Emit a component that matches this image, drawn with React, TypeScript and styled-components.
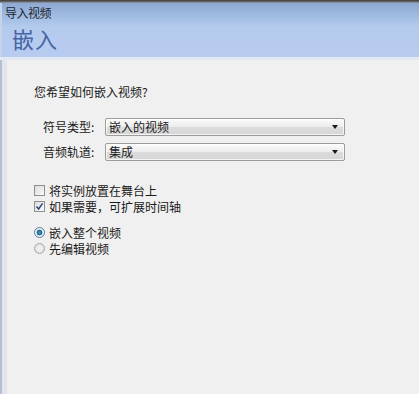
import React from 'react';
import styled, {createGlobalStyle} from 'styled-components';

const GlobalStyle = createGlobalStyle`
	html, body {
		margin: 0;
		padding: 0;
		background: #f0f0f0;
	}
	body {
		font-family: "Noto Sans CJK SC", "Noto Sans", sans-serif;
		font-size: 12px;
		color: #1a1a1a;
	}
`;

const Window = styled.div`
	width: 419px;
	height: 394px;
	display: flex;
	flex-direction: column;
	overflow: hidden;
	background: #f0f0f0;
`;

const TopEdge = styled.div`
	height: 3px;
	flex: none;
	background: linear-gradient(#3c3c3c, #6a6a6a 60%, #9aa6b8);
`;

const Header = styled.div`
	height: 54px;
	flex: none;
	display: flex;
	flex-direction: column;
	background: linear-gradient(
		#8da8d2 0px,
		#a4c0e4 16px,
		#b4cbee 24px,
		#b8cbf0 100%
	);
	border-left: 2px solid #c6d4ea;
`;

const WindowTitle = styled.div`
	height: 19px;
	line-height: 19px;
	padding-left: 3px;
	font-size: 12px;
	color: #1e2430;
	letter-spacing: -0.5px;
`;

const PageTitle = styled.div`
	padding-left: 10px;
	margin-top: 1px;
	font-size: 22px;
	line-height: 30px;
	color: #4564a4;
	letter-spacing: 1px;
`;

const HeaderShade = styled.div`
	height: 3px;
	flex: none;
	background: #e3e9f3;
`;

const Body = styled.div`
	flex: 1;
	display: flex;
	flex-direction: column;
	padding: 24px 0 0 30px;
	border-left: 2px solid #b4bfcf;
	box-shadow: inset 5px 0 0 #e2e6ec;
`;

const Question = styled.div`
	line-height: 16px;
	margin-left: 2px;
`;

const Form = styled.div`
	display: grid;
	grid-template-columns: 60px 240px;
	column-gap: 2px;
	row-gap: 7px;
	align-items: center;
	margin: 18px 0 0 11px;
`;

const Label = styled.div`
	line-height: 18px;
	white-space: nowrap;
`;

const Select = styled.div`
	position: relative;
	height: 18px;
	box-sizing: border-box;
	border: 1px solid #9c9c9c;
	border-radius: 2px;
	background: linear-gradient(#fbfbfb, #ececec 50%, #dcdcdc 51%, #d6d6d6);
	line-height: 16px;
	padding-left: 3px;
	box-shadow: inset 0 0 0 1px rgba(255, 255, 255, 0.7);
`;

const Arrow = styled.span`
	position: absolute;
	right: 6px;
	top: 6px;
	width: 0;
	height: 0;
	border-left: 3.5px solid transparent;
	border-right: 3.5px solid transparent;
	border-top: 4px solid #1a1a1a;
`;

const Group = styled.div<{$gap: number}>`
	display: flex;
	flex-direction: column;
	margin-top: ${(p) => p.$gap}px;
`;

const Option = styled.div`
	display: flex;
	align-items: center;
	height: 16px;
	gap: 4px;
	margin-left: 2px;
`;

const Box = styled.span<{$checked?: boolean}>`
	width: 11px;
	height: 11px;
	box-sizing: border-box;
	border: 1px solid #8f8f8f;
	background: linear-gradient(135deg, #dcdcdc, #fafafa);
	display: flex;
	align-items: center;
	justify-content: center;
	flex: none;
`;

const Radio = styled.span<{$checked?: boolean}>`
	width: 11px;
	height: 11px;
	box-sizing: border-box;
	border-radius: 50%;
	border: 1px solid ${(p) => (p.$checked ? '#5a7a98' : '#a8a8a8')};
	background: ${(p) =>
		p.$checked
			? 'radial-gradient(circle, #3fa0c8 0, #1c5f8c 2.6px, #e8eef4 3.2px, #f6f6f6 100%)'
			: 'radial-gradient(circle, #f6f6f6, #dadada)'};
	flex: none;
`;

const Check = () => (
	<svg width="9" height="9" viewBox="0 0 9 9">
		<path d="M1.5 4.5 L3.6 7 L7.6 1.4" fill="none" stroke="#23447e" strokeWidth="1.4" />
	</svg>
);

export default function App() {
	return (
		<Window>
			<GlobalStyle />
			<TopEdge />
			<Header>
				<WindowTitle>导入视频</WindowTitle>
				<PageTitle>嵌入</PageTitle>
			</Header>
			<HeaderShade />
			<Body>
				<Question>您希望如何嵌入视频?</Question>
				<Form>
					<Label>符号类型:</Label>
					<Select>
						嵌入的视频
						<Arrow />
					</Select>
					<Label>音频轨道:</Label>
					<Select>
						集成
						<Arrow />
					</Select>
				</Form>
				<Group $gap={21}>
					<Option>
						<Box />
						将实例放置在舞台上
					</Option>
					<Option>
						<Box $checked>
							<Check />
						</Box>
						如果需要，可扩展时间轴
					</Option>
				</Group>
				<Group $gap={10}>
					<Option>
						<Radio $checked />
						嵌入整个视频
					</Option>
					<Option>
						<Radio />
						先编辑视频
					</Option>
				</Group>
			</Body>
		</Window>
	);
}
